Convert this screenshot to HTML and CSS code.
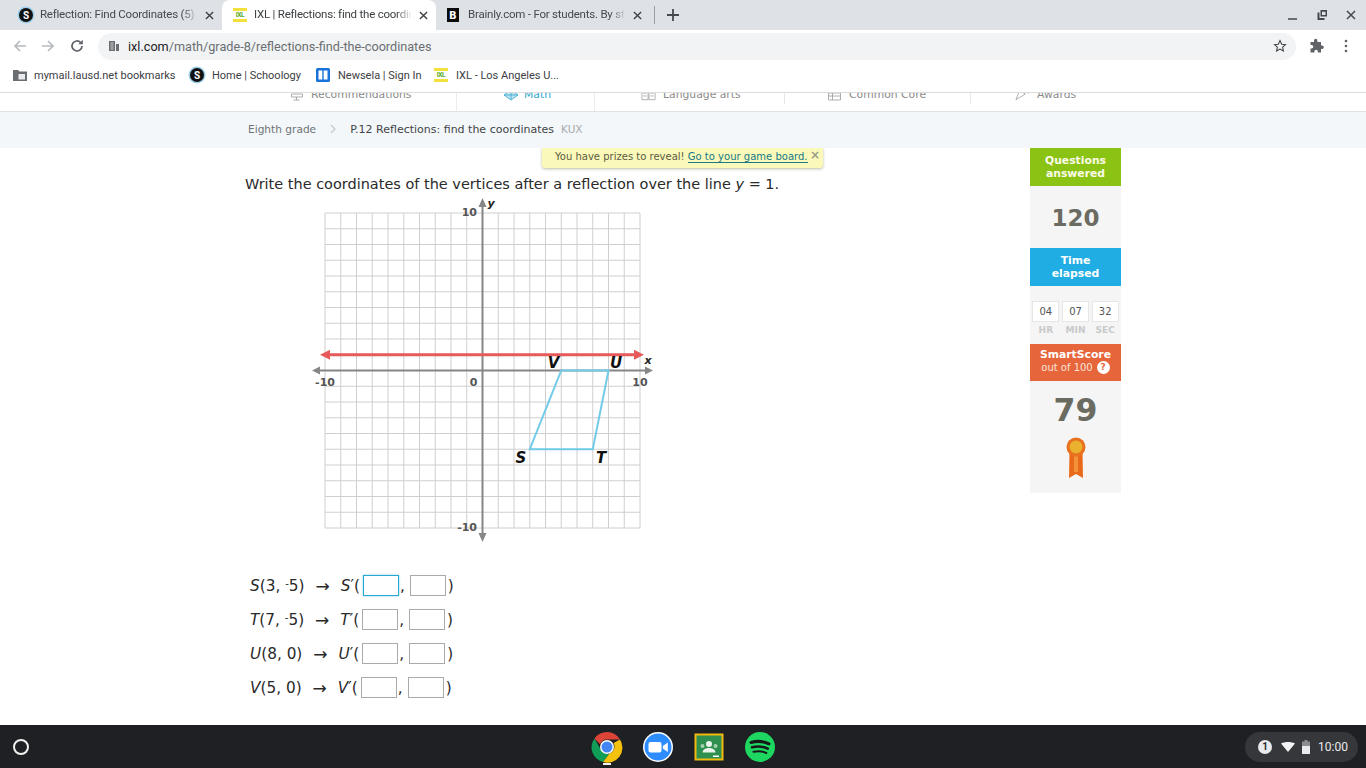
FILE: index.html
```html
<!DOCTYPE html>
<html lang="en">
<head>
<meta charset="utf-8">
<title>IXL | Reflections: find the coordinates</title>
<link rel="stylesheet" href="styles.css">
</head>
<body>
<div class="screen">
  <header class="tabstrip">
    <div class="tab">
      <span class="fav fav-s">S</span>
      <span class="tab-title">Reflection: Find Coordinates (5)</span>
      <svg class="tab-x" viewBox="0 0 10 10"><path d="M1 1l8 8M9 1l-8 8"/></svg>
    </div>
    <div class="tab tab-active">
      <span class="fav fav-ixl">IXL</span>
      <span class="tab-title">IXL | Reflections: find the coordin</span>
      <svg class="tab-x" viewBox="0 0 10 10"><path d="M1 1l8 8M9 1l-8 8"/></svg>
    </div>
    <div class="tab">
      <span class="fav fav-b">B</span>
      <span class="tab-title">Brainly.com - For students. By st</span>
      <svg class="tab-x" viewBox="0 0 10 10"><path d="M1 1l8 8M9 1l-8 8"/></svg>
    </div>
    <span class="tab-sep"></span>
    <svg class="new-tab" viewBox="0 0 12 12"><path d="M6 0v12M0 6h12"/></svg>
    <div class="win-controls">
      <svg viewBox="0 0 12 12"><path class="win-line" d="M1 10h9"/></svg>
      <svg viewBox="0 0 12 12"><path class="win-fill" d="M1.5 3.5h2v5.500h5v2h-7zM4.500 1h6.500v6.500h-6.500zM6 2.800v3.200h3.500v-3.200z"/></svg>
      <svg viewBox="0 0 12 12"><path class="win-line" d="M2 2l8 8M10 2l-8 8"/></svg>
    </div>
  </header>

  <div class="toolbar">
    <svg class="tool tool-back" viewBox="0 0 16 16"><path d="M14 8H3M8 3L3 8l5 5"/></svg>
    <svg class="tool tool-fwd" viewBox="0 0 16 16"><path d="M2 8h11M8 3l5 5-5 5"/></svg>
    <svg class="tool tool-reload" viewBox="0 0 16 16"><path d="M13 8a5 5 0 1 1-1.500-3.600"/><path class="tool-solid" d="M13.800 1.800v4.400H9.400z"/></svg>
    <div class="omnibox">
      <svg class="site-icon" viewBox="0 0 12 12"><path d="M1 1h6v10H1zM8 4h3v7H8z"/><path class="site-gap" d="M2.500 3h3M2.500 5h3M2.500 7h3M2.500 9h3"/></svg>
      <span class="url"><b>ixl.com</b>/math/grade-8/reflections-find-the-coordinates</span>
      <svg class="star" viewBox="0 0 16 16"><path d="M8 1.800l1.900 4.100 4.400.5-3.300 3 .9 4.400L8 11.600l-3.900 2.200.9-4.400-3.300-3 4.400-.5z"/></svg>
    </div>
    <svg class="puzzle" viewBox="0 0 16 16"><path d="M6 2.500a1.700 1.700 0 0 1 3.400 0V4h3.600v3.400h1a1.800 1.800 0 0 1 0 3.600h-1v3.500H9.800v-1a1.700 1.700 0 0 0-3.400 0v1H2.500v-3.900h1a1.800 1.800 0 0 0 0-3.600h-1V4H6z"/></svg>
    <svg class="dots" viewBox="0 0 4 14"><circle cx="2" cy="2" r="1.300"/><circle cx="2" cy="7" r="1.300"/><circle cx="2" cy="12" r="1.300"/></svg>
  </div>

  <nav class="bookmarks">
    <span class="bm bm-1">
      <svg class="folder" viewBox="0 0 14 12"><path d="M0 1h5l1.500 1.500H14V12H0z"/><path class="folder-in" d="M5.500 5h6.500v5.500H5.500z"/></svg>
      mymail.lausd.net bookmarks
    </span>
    <span class="bm bm-2"><span class="fav fav-s">S</span>Home | Schoology</span>
    <span class="bm bm-3">
      <svg class="newsela" viewBox="0 0 14 14"><rect width="14" height="14" rx="1.500"/><path d="M2.500 2.500h3.800v9H2.500zM7.700 2.500h3.800v9H7.700z"/></svg>
      Newsela | Sign In
    </span>
    <span class="bm bm-4"><span class="fav fav-ixl">IXL</span>IXL - Los Angeles U...</span>
  </nav>

  <div class="site-nav">
    <a class="nav-item nav-rec">
      <svg class="nav-icon" viewBox="0 0 14 12"><path d="M2 2h11M2 5h11v3H2zM7 8v3M4 11h6"/></svg>Recommendations
    </a>
    <a class="nav-item nav-math">
      <svg class="nav-icon nav-icon-math" viewBox="0 0 16 12"><path d="M8 1l7 5-7 5-7-5zM1 6h14M8 1v10"/></svg>Math
    </a>
    <a class="nav-item nav-lang">
      <svg class="nav-icon" viewBox="0 0 16 12"><path d="M1 1h6.500v10H1zM8.500 1H15v10H8.500zM2.500 4h3.500M2.500 7h3.500M10 4h3.500M10 7h3.500"/></svg>Language arts
    </a>
    <a class="nav-item nav-common">
      <svg class="nav-icon" viewBox="0 0 14 12"><path d="M1 1h12v10H1zM1 4h12M1 7h12M5 1v10"/></svg>Common Core
    </a>
    <a class="nav-item nav-awards">
      <svg class="nav-icon" viewBox="0 0 16 12"><path d="M1 11L5 1l6 4-10 6zM5 1l10 3"/></svg>Awards
    </a>
  </div>

  <div class="crumbs">
    <span class="crumb">Eighth grade</span>
    <svg class="crumb-arrow" viewBox="0 0 6 10"><path d="M1 1l4 4-4 4"/></svg>
    <span class="crumb-cur">P.12 Reflections: find the coordinates</span>
    <span class="crumb-code">KUX</span>
  </div>

  <main class="content">
    <div class="notice">
      You have prizes to reveal! <a class="notice-link">Go to your game board.</a>
      <span class="notice-x">×</span>
    </div>

    <section class="question">
      <p class="prompt">Write the coordinates of the vertices after a reflection over the line <i>y</i> = 1.</p>

      <svg class="graph" viewBox="305 195 355 350" width="355" height="350">
        <rect class="g-bg" x="325" y="213" width="315" height="315"/>
        <path class="g-grid" d="M325 213V528M340.750 213V528M356.500 213V528M372.250 213V528M388 213V528M403.750 213V528M419.500 213V528M435.250 213V528M451 213V528M466.750 213V528M482.500 213V528M498.250 213V528M514 213V528M529.750 213V528M545.500 213V528M561.250 213V528M577 213V528M592.750 213V528M608.500 213V528M624.250 213V528M640 213V528M325 213H640M325 228.750H640M325 244.500H640M325 260.250H640M325 276H640M325 291.750H640M325 307.500H640M325 323.250H640M325 339H640M325 354.750H640M325 370.500H640M325 386.250H640M325 402H640M325 417.750H640M325 433.500H640M325 449.250H640M325 465H640M325 480.750H640M325 496.500H640M325 512.250H640M325 528H640"/>
        <path class="g-axis" d="M318 370.500H647M482.500 204V536"/>
        <path class="g-head" d="M312 370.500l8-4v8zM653 370.500l-8-4v8zM482.500 198l-4 9h8zM482.500 542l-4-9h8z"/>
        <path class="g-shape" d="M561.250 370.500H608.500L592.750 449.250H529.750Z"/>
        <path class="g-red" d="M328 354.750H637"/>
        <path class="g-red-head" d="M320 354.750l10-5v10zM644 354.750l-10-5v10z"/>
        <text class="g-num" x="477" y="216" text-anchor="end">10</text>
        <text class="g-num" x="325" y="386" text-anchor="middle">-10</text>
        <text class="g-num" x="473.500" y="386" text-anchor="middle">0</text>
        <text class="g-num" x="640" y="386" text-anchor="middle">10</text>
        <text class="g-num" x="477" y="531" text-anchor="end">-10</text>
        <text class="g-axis-name" x="491" y="207" text-anchor="middle">y</text>
        <text class="g-axis-name" x="648" y="364" text-anchor="middle">x</text>
        <text class="g-pt" x="553.500" y="368" text-anchor="middle">V</text>
        <text class="g-pt" x="616" y="368" text-anchor="middle">U</text>
        <text class="g-pt" x="521" y="463" text-anchor="middle">S</text>
        <text class="g-pt" x="601" y="463" text-anchor="middle">T</text>
      </svg>

      <div class="answers">
        <div class="answer"><span class="from"><i>S</i>(3, <sup class="neg">-</sup>5)</span><span class="arrow">→</span><span><i>S</i>′(</span><input class="box box-focus" type="text" aria-label="S x"><span class="comma">,</span><input class="box" type="text" aria-label="S y"><span>)</span></div>
        <div class="answer"><span class="from"><i>T</i>(7, <sup class="neg">-</sup>5)</span><span class="arrow">→</span><span><i>T</i>′(</span><input class="box" type="text" aria-label="T x"><span class="comma">,</span><input class="box" type="text" aria-label="T y"><span>)</span></div>
        <div class="answer"><span class="from"><i>U</i>(8, 0)</span><span class="arrow">→</span><span><i>U</i>′(</span><input class="box" type="text" aria-label="U x"><span class="comma">,</span><input class="box" type="text" aria-label="U y"><span>)</span></div>
        <div class="answer"><span class="from"><i>V</i>(5, 0)</span><span class="arrow">→</span><span><i>V</i>′(</span><input class="box" type="text" aria-label="V x"><span class="comma">,</span><input class="box" type="text" aria-label="V y"><span>)</span></div>
      </div>
    </section>

    <aside class="stats">
      <div class="stat-head stat-green">Questions<br>answered</div>
      <div class="stat-count">120</div>
      <div class="stat-head stat-blue">Time<br>elapsed</div>
      <div class="timer">
        <div class="timer-cell"><span class="timer-val">04</span><span class="timer-unit">HR</span></div>
        <div class="timer-cell"><span class="timer-val">07</span><span class="timer-unit">MIN</span></div>
        <div class="timer-cell"><span class="timer-val">32</span><span class="timer-unit">SEC</span></div>
      </div>
      <div class="stat-orange">
        <div class="score-title">SmartScore</div>
        <div class="score-sub">out of 100 <span class="score-q">?</span></div>
      </div>
      <div class="score">
        <div class="score-val">79</div>
        <svg class="ribbon" viewBox="0 0 20 42" width="20" height="42">
          <path class="rib-back" d="M3.500 14h13l.5 27-7-4-7 4z"/>
          <path class="rib-light" d="M8 16h4v19H8z"/>
          <circle class="rib-ring" cx="10" cy="10" r="9.500"/>
          <circle class="rib-gold" cx="10" cy="10" r="6.500"/>
        </svg>
      </div>
    </aside>
  </main>

  <footer class="shelf">
    <span class="launcher"></span>
    <div class="apps">
      <span class="app app-chrome">
        <svg viewBox="0 0 32 32" width="32" height="32">
          <path fill="#db4437" d="M16 1a15 15 0 0 1 13 7.500H16a7.500 7.500 0 0 0-7 4.700L3.500 7.500A15 15 0 0 1 16 1z"/>
          <path fill="#0f9d58" d="M3.500 7.500L9.800 18.500a7.500 7.500 0 0 0 8.500 4.300L12 31A15 15 0 0 1 3.500 7.500z"/>
          <path fill="#f4c20d" d="M29 8.500A15 15 0 0 1 12 31l6.300-8.200A7.500 7.500 0 0 0 22.500 12z"/>
          <circle cx="16" cy="16" r="7" fill="#fff"/>
          <circle cx="16" cy="16" r="5.500" fill="#4285f4"/>
        </svg>
        <span class="app-dot"></span>
      </span>
      <span class="app">
        <svg viewBox="0 0 32 32" width="32" height="32">
          <circle cx="16" cy="16" r="15" fill="#fff"/>
          <circle cx="16" cy="16" r="13.500" fill="#2d8cff"/>
          <rect x="6.500" y="11" width="13" height="10.500" rx="2" fill="#fff"/>
          <path fill="#fff" d="M20.800 15l5-3.500v9.500l-5-3.500z"/>
        </svg>
      </span>
      <span class="app">
        <svg viewBox="0 0 32 32" width="32" height="32">
          <rect x="2.500" y="3.500" width="27" height="25" fill="#2f8f4e" stroke="#f2b90f" stroke-width="2"/>
          <circle cx="16" cy="13" r="3" fill="#e9f3ec"/>
          <path fill="#e9f3ec" d="M9.500 21.500c.5-3.500 3.500-4.500 6.500-4.500s6 1 6.500 4.500z"/>
          <circle cx="9.500" cy="15" r="2" fill="#a6d0b4"/>
          <circle cx="22.500" cy="15" r="2" fill="#a6d0b4"/>
          <rect x="20" y="24.500" width="6" height="1.500" fill="#fff"/>
        </svg>
      </span>
      <span class="app">
        <svg viewBox="0 0 32 32" width="32" height="32">
          <circle cx="16" cy="16" r="15" fill="#1ed760"/>
          <path fill="none" stroke="#16181a" stroke-linecap="round" stroke-width="3" d="M7 11.500c6-1.800 12-1.500 18 1.300"/>
          <path fill="none" stroke="#16181a" stroke-linecap="round" stroke-width="2.500" d="M8 16.300c5.500-1.500 11-1 15.800 1.400"/>
          <path fill="none" stroke="#16181a" stroke-linecap="round" stroke-width="2" d="M9.500 20.800c4.500-1.100 9-.8 12.800 1.200"/>
        </svg>
      </span>
    </div>
    <div class="status">
      <span class="notif">1</span>
      <svg class="wifi" viewBox="0 0 14 10" width="14" height="10"><path d="M0 1.500C4 -.5 10 -.5 14 1.500L7 10z"/></svg>
      <svg class="battery" viewBox="0 0 8 14" width="8" height="14"><path class="bat-dim" d="M2.500 0h3v1.500H8V6H0V1.500h2.500z"/><path class="bat-full" d="M0 6h8v8H0z"/></svg>
      <span class="clock">10:00</span>
    </div>
  </footer>
</div>
</body>
</html>
```

FILE: styles.css
```css
* { box-sizing: border-box; }
html, body { margin: 0; padding: 0; }
body { background: #fff; font-family: Roboto, "Liberation Sans", sans-serif; overflow: hidden; }
.screen { width: 1366px; height: 768px; display: flex; flex-direction: column; overflow: hidden; }

/* tab strip */
.tabstrip { height: 30px; flex: none; background: #dee1e6; display: flex; align-items: center; padding-left: 8px; }
.tab { width: 214px; height: 30px; flex: none; display: flex; align-items: center; padding-left: 11px; position: relative; font-size: 11.500px; letter-spacing: -.22px; color: #45494e; }
.tab-active { background: #fff; border-radius: 8px 8px 0 0; color: #3c4043; }
.tab-title { width: 158px; margin-left: 7px; padding-bottom: 2px; white-space: nowrap; overflow: hidden; -webkit-mask-image: linear-gradient(90deg, #000 90%, transparent); mask-image: linear-gradient(90deg, #000 90%, transparent); }
.tab-x { width: 9px; height: 9px; margin-left: 7px; fill: none; stroke: #3c4043; stroke-width: 1.500; }
.tab-sep { width: 1px; height: 18px; background: #9aa0a6; margin-left: 4px; }
.new-tab { width: 12px; height: 12px; margin-left: 12px; fill: none; stroke: #45494e; stroke-width: 1.800; }
.win-controls { margin-left: auto; display: flex; gap: 17px; padding-right: 9px; }
.win-controls svg { width: 12px; height: 12px; display: block; }
.win-line { fill: none; stroke: #45494e; stroke-width: 1.500; }
.win-fill { fill: #45494e; fill-rule: evenodd; }

.fav { width: 14px; height: 14px; flex: none; display: inline-flex; align-items: center; justify-content: center; font-weight: 700; letter-spacing: 0; }
.fav-s { border-radius: 50%; background: #111; color: #fff; font-size: 10px; box-shadow: 0 0 0 1.500px #9ed0ea; }
.fav-ixl { background: linear-gradient(#f2e03c 0 3px, #fff 3px 11px, #f2e03c 11px); color: #5aa91e; font-size: 6.500px; letter-spacing: -.4px; }
.fav-b { background: linear-gradient(90deg, #0b0b0b 12px, transparent 12px); color: #fff; font-size: 10px; font-family: "DejaVu Sans", sans-serif; justify-content: flex-start; padding-left: 2px; }

/* toolbar */
.toolbar { height: 32px; flex: none; background: #fff; display: flex; align-items: center; padding-left: 12px; }
.tool { width: 16px; height: 16px; flex: none; fill: none; stroke-width: 1.700; }
.tool-back, .tool-fwd { stroke: #b7babe; }
.tool-fwd { margin-left: 12px; }
.tool-reload { margin-left: 13px; stroke: #5f6368; }
.tool-solid { fill: #5f6368; stroke: none; }
.omnibox { width: 1198px; height: 27px; margin-left: 13px; border-radius: 14px; background: #f1f3f4; display: flex; align-items: center; padding-left: 10px; padding-right: 9px; }
.site-icon { width: 12px; height: 12px; fill: #6a6d71; flex: none; }
.site-gap { fill: none; stroke: #f1f3f4; stroke-width: .8; }
.url { margin-left: 8px; font-size: 12.670px; color: #6b6f73; white-space: nowrap; }
.url b { font-weight: 400; color: #202124; }
.star { width: 14px; height: 14px; margin-left: auto; fill: none; stroke: #3c4043; stroke-width: 1.200; }
.puzzle { width: 16px; height: 16px; margin-left: 12px; fill: #5f6368; flex: none; }
.dots { width: 4px; height: 14px; margin-left: 20px; fill: #5f6368; flex: none; }

/* bookmarks */
.bookmarks { height: 30px; flex: none; background: #fff; display: flex; align-items: center; font-size: 11px; color: #3c4043; padding: 0 0 4px 13px; }
.bm { display: flex; align-items: center; white-space: nowrap; }
.bm .fav { margin-right: 8px; }
.bm-1 { width: 177px; }
.bm-2 { width: 126px; }
.bm-3 { width: 118px; }
.folder { width: 14px; height: 12px; margin-right: 7px; fill: #6a6d71; }
.folder-in { fill: #e9eaeb; }
.newsela { width: 14px; height: 14px; margin-right: 8px; fill: #1a73d8; }
.newsela path { fill: #fff; }

/* site nav, scrolled so only its lower part shows */
.site-nav { height: 19px; flex: none; border-top: 1px solid #dcdcdc; display: flex; font-family: "DejaVu Sans", Verdana, sans-serif; font-size: 10.800px; color: #8a8a8a; overflow: hidden; padding-left: 282px; background: #fff; position: relative; }
.nav-item { display: flex; align-items: flex-start; white-space: nowrap; margin-top: -5px; padding-top: 0; height: 25px; }
.nav-icon { width: 15px; height: 12px; margin-top: 1px; margin-right: 7px; fill: none; stroke: #9a9a9a; stroke-width: .8; flex: none; }
.nav-rec { width: 174px; padding-left: 7px; }
.nav-math { width: 139px; padding-left: 46px; color: #2ea6cc; border-bottom: 2px solid #3ab0cf; border-left: 1px solid #ececec; border-right: 1px solid #ececec; }
.nav-icon-math { stroke: #35a7d0; fill: #bfe4f1; width: 16px; margin-right: 5px; }
.nav-lang { width: 190px; padding-left: 46px; height: 16px; border-right: 1px solid #e6e6e6; }
.nav-common { width: 186px; padding-left: 42px; height: 16px; border-right: 1px solid #e6e6e6; }
.nav-awards { padding-left: 44px; }

/* breadcrumbs */
.crumbs { height: 37px; flex: none; background: #f3f7fa; border-top: 1px solid #dfe3e6; display: flex; align-items: center; padding: 0 0 2px 248px; font-family: "DejaVu Sans", Verdana, sans-serif; font-size: 11px; color: #6e7376; }
.crumb { font-size: 10.600px; }
.crumb-arrow { width: 6px; height: 10px; margin: 0 14px; fill: none; stroke: #c4c8cb; stroke-width: 1.200; }
.crumb-cur { color: #3f4447; }
.crumb-code { margin-left: 7px; color: #a6aaad; font-size: 10.500px; }

/* content */
.content { flex: 1; min-height: 0; position: relative; display: grid; grid-template-columns: 245px 785px 91px; align-items: start; background: #fff; font-family: "DejaVu Sans", Verdana, sans-serif; overflow: hidden; }
.notice { position: absolute; left: 542px; top: 0; width: 281px; height: 20px; background: #fbf9b9; border-radius: 0 0 3px 3px; box-shadow: 0 1px 3px rgba(120,120,80,.5); font-size: 10.030px; line-height: 18px; color: #5b5c44; padding-left: 13px; white-space: nowrap; }
.notice-link { color: #167a8a; border-bottom: 1px solid #167a8a; }
.notice-x { position: absolute; right: 3px; top: -2px; font-size: 12px; font-weight: 700; color: #9b9b8a; }

.question { grid-column: 2; padding-top: 26px; }
.prompt { margin: 0; font-size: 14.470px; line-height: 20px; color: #2a2a2a; white-space: nowrap; }
.graph { display: block; margin: 1px 0 0 60px; }
.g-bg { fill: #fff; }
.g-grid { fill: none; stroke: #cfcfcf; stroke-width: 1; }
.g-axis { fill: none; stroke: #868686; stroke-width: 2; }
.g-head { fill: #868686; }
.g-shape { fill: none; stroke: #72cbe8; stroke-width: 2; }
.g-red { fill: none; stroke: #e65a5a; stroke-width: 3; }
.g-red-head { fill: #e65a5a; }
.g-num { font-size: 11px; font-weight: 700; fill: #555; }
.g-axis-name { font-size: 11px; font-weight: 700; font-style: italic; fill: #222; }
.g-pt { font-size: 15px; font-weight: 700; font-style: italic; fill: #111; }

.answers { margin: 29px 0 0 5px; display: flex; flex-direction: column; gap: 11px; }
.answer { height: 23px; display: flex; align-items: center; font-size: 15.300px; color: #2a2a2a; white-space: nowrap; }
.from { margin-right: 11px; }
.arrow { margin-right: 11px; font-size: 17px; }
.neg { font-size: 10px; line-height: 0; vertical-align: 4px; }
.box { width: 36px; height: 21px; margin: 0 0 0 3px; padding: 0; border: 1px solid #aaa; background: #fff; border-radius: 0; outline: none; }
.box-focus { border: 1px solid #2aa7d1; box-shadow: 0 0 2px #7ccbe6; }
.comma { margin: 0 2px 0 1px; }
.answer .box + span:last-child { margin-left: 2px; }

/* side stats */
.stats { grid-column: 3; height: 345px; background: #f5f5f5; display: flex; flex-direction: column; }
.stat-head { height: 38px; flex: none; display: flex; align-items: center; justify-content: center; text-align: center; font-size: 10.800px; line-height: 13px; font-weight: 700; color: #fff; }
.stat-green { background: #8bc314; color: #fbfbe8; }
.stat-blue { background: #1fade3; }
.stat-count { height: 62px; flex: none; display: flex; align-items: center; justify-content: center; padding-top: 2px; font-size: 23px; font-weight: 700; color: #6b6b62; }
.timer { height: 58px; flex: none; display: flex; gap: 2px; padding: 15px 2px 0; }
.timer-cell { flex: 1; display: flex; flex-direction: column; align-items: center; }
.timer-val { width: 27px; height: 21px; background: #fff; border: 1px solid #e6e6e6; font-size: 10px; line-height: 19px; text-align: center; color: #555; }
.timer-unit { margin-top: 2px; font-size: 9px; font-weight: 700; color: #c9c9c9; line-height: 12px; }
.stat-orange { height: 37px; flex: none; background: #e6653a; color: #fff; text-align: center; padding-top: 5px; }
.score-title { font-size: 10.800px; font-weight: 700; line-height: 12px; }
.score-sub { font-size: 10px; line-height: 13px; color: #fbe3da; display: flex; justify-content: center; align-items: center; gap: 4px; }
.score-q { width: 13px; height: 13px; border-radius: 50%; background: #fff; color: #e6653a; font-size: 9px; font-weight: 700; line-height: 13px; }
.score { flex: 1; display: flex; flex-direction: column; align-items: center; padding-top: 11px; }
.score-val { font-size: 31.500px; font-weight: 700; line-height: 36px; color: #6b6b62; }
.ribbon { display: block; margin-top: 9px; }
.rib-back { fill: #ea6a1c; }
.rib-light { fill: #f4923a; }
.rib-ring { fill: #e8701e; }
.rib-gold { fill: #eab12e; }

/* shelf */
.shelf { height: 43px; flex: none; background: #1f2023; position: relative; display: flex; align-items: center; }
.launcher { width: 16px; height: 16px; border: 2px solid #f1f1f1; border-radius: 50%; margin-left: 13px; }
.apps { position: absolute; left: 591px; top: 6px; display: flex; gap: 19px; }
.app { width: 32px; height: 32px; display: block; position: relative; }
.app svg { display: block; }
.app-dot { position: absolute; left: 12px; top: 32px; width: 8px; height: 2px; background: #f1f1f1; }
.status { position: absolute; left: 1245px; top: 7px; width: 113px; height: 30px; border-radius: 15px; background: #36373a; display: flex; align-items: center; padding-left: 13px; }
.notif { width: 14px; height: 14px; border-radius: 50%; background: #e8eaed; color: #2a2b2e; font-size: 10px; font-weight: 700; text-align: center; line-height: 14px; }
.wifi { margin-left: 9px; fill: #f1f3f4; }
.battery { margin-left: 7px; }
.bat-dim { fill: #8b8d90; }
.bat-full { fill: #e8eaed; }
.clock { margin-left: 8px; color: #e8eaed; font-size: 12px; }
```
